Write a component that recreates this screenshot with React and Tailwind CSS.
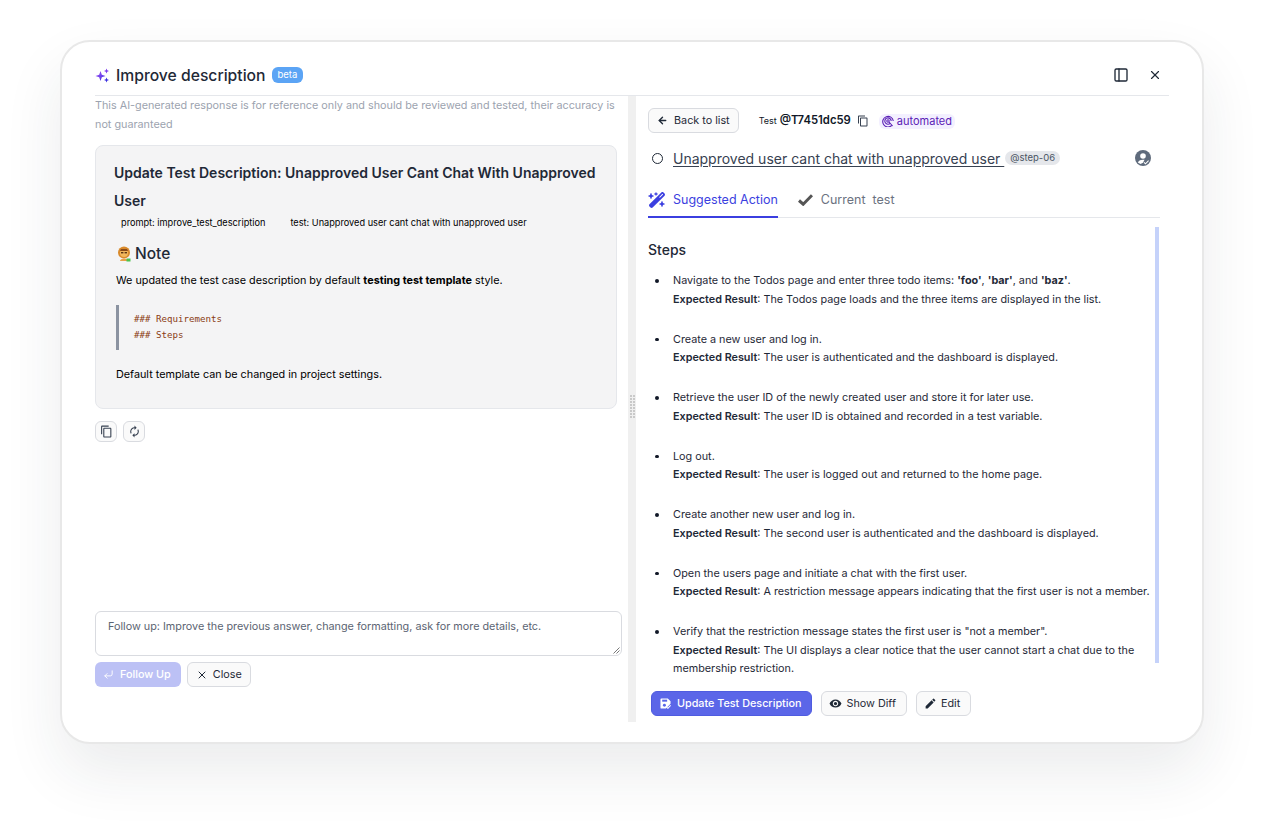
import { ArrowLeft, CornerDownLeft, PanelLeft, X } from "lucide-react";
import { FaWandMagicSparkles } from "react-icons/fa6";
import { MdAutorenew, MdEdit, MdOutlineContentCopy, MdVisibility } from "react-icons/md";

const steps = [
  {
    action: (
      <>
        Navigate to the Todos page and enter three todo items: <b>'foo'</b>, <b>'bar'</b>, and <b>'baz'</b>.
      </>
    ),
    result: "The Todos page loads and the three items are displayed in the list.",
  },
  { action: "Create a new user and log in.", result: "The user is authenticated and the dashboard is displayed." },
  {
    action: "Retrieve the user ID of the newly created user and store it for later use.",
    result: "The user ID is obtained and recorded in a test variable.",
  },
  { action: "Log out.", result: "The user is logged out and returned to the home page." },
  {
    action: "Create another new user and log in.",
    result: "The second user is authenticated and the dashboard is displayed.",
  },
  {
    action: "Open the users page and initiate a chat with the first user.",
    result: "A restriction message appears indicating that the first user is not a member.",
  },
  {
    action: 'Verify that the restriction message states the first user is "not a member".',
    result: "The UI displays a clear notice that the user cannot start a chat due to the membership restriction.",
  },
];

function SparkleIcon() {
  return (
    <svg width="15" height="15" viewBox="0 0 15 15">
      <defs>
        <linearGradient id="spark" x1="0" y1="0" x2="1" y2="1">
          <stop offset="0" stopColor="#a855f7" />
          <stop offset="1" stopColor="#3b2fe0" />
        </linearGradient>
      </defs>
      <path d="M5.5 3 L6.8 6.7 L10.5 8 L6.8 9.3 L5.5 13 L4.2 9.3 L0.5 8 L4.2 6.7 Z" fill="url(#spark)" />
      <path d="M11.5 0.5 L12.2 2.3 L14 3 L12.2 3.7 L11.5 5.5 L10.8 3.7 L9 3 L10.8 2.3 Z" fill="#7c3aed" />
      <path d="M11.5 9.5 L12.2 11.3 L14 12 L12.2 12.7 L11.5 14.5 L10.8 12.7 L9 12 L10.8 11.3 Z" fill="#3b2fe0" />
    </svg>
  );
}

function FarmerEmoji() {
  return (
    <svg width="14" height="16" viewBox="0 0 14 16">
      <ellipse cx="7" cy="6.5" rx="6" ry="6" fill="#d98a2b" />
      <circle cx="7" cy="7" r="4" fill="#f2b75c" />
      <path d="M3 5 L11 5 L10 3 L4 3 Z" fill="#8a4b18" />
      <rect x="4" y="6" width="2.4" height="1.4" fill="#5b3413" />
      <rect x="7.6" y="6" width="2.4" height="1.4" fill="#5b3413" />
      <path d="M3 15 C3 11.5 11 11.5 11 15 Z" fill="#e7a34a" />
      <rect x="9.5" y="12.5" width="4" height="3" fill="#4cc24c" />
    </svg>
  );
}

function AutomatedIcon() {
  return (
    <svg width="12" height="12" viewBox="0 0 12 12" fill="none" stroke="#5b21b6" strokeWidth="1.1">
      <path d="M9.8 10.4 A5.3 5.3 0 1 1 11.3 6" />
      <path d="M8.4 8.2 A3.2 3.2 0 1 1 9.2 6" />
      <circle cx="6" cy="6" r="1.2" />
      <path d="M7 7 L10.6 11" />
    </svg>
  );
}

function UserCheckIcon() {
  return (
    <svg width="16" height="16" viewBox="0 0 16 16">
      <circle cx="8" cy="8" r="8" fill="#5f6b7c" />
      <circle cx="8" cy="6" r="2.8" fill="#fff" />
      <path d="M2.8 12.5 C4 9.8 7 9.4 9.5 9.8 L8 12.8 L5.5 14 Z" fill="#fff" />
      <path d="M9 12.3 L10.5 13.8 L13.6 10.6" fill="none" stroke="#fff" strokeWidth="1.1" />
    </svg>
  );
}

function SaveCheckIcon() {
  return (
    <svg width="11" height="11" viewBox="0 0 12 12">
      <path d="M1.5 0.5 H8.5 L11.5 3.5 V6.2 L6.5 11.5 H1.5 A1 1 0 0 1 0.5 10.5 V1.5 A1 1 0 0 1 1.5 0.5 Z" fill="#fff" />
      <rect x="2.4" y="1.8" width="5.4" height="2.2" fill="#5865e8" />
      <circle cx="4.8" cy="8" r="1.6" fill="#5865e8" />
      <path d="M7.2 10 L8.6 11.3 L11.6 8" fill="none" stroke="#fff" strokeWidth="1.1" />
    </svg>
  );
}

function CheckIcon() {
  return (
    <svg width="15" height="12" viewBox="0 0 15 12" fill="none" stroke="#555" strokeWidth="3">
      <path d="M1 6.5 L5.2 10.2 L14 1.2" />
    </svg>
  );
}

function Button({ children, className = "" }) {
  return (
    <button
      className={`flex h-[25px] items-center rounded-md border border-[#d9dbe0] bg-[#fafafa] text-[10.8px] leading-[16px] text-[#1f2937] ${className}`}
    >
      {children}
    </button>
  );
}

function Splitter() {
  return (
    <div className="flex w-[8px] shrink-0 flex-col items-center justify-center bg-[#f0f0f0]">
      <div className="grid grid-cols-2 gap-x-[1px] gap-y-[1px] pb-[5px]">
        {[...Array(16)].map((_, i) => (
          <span key={i} className="h-[2px] w-[2px] bg-[#c9c9c9]" />
        ))}
      </div>
    </div>
  );
}

function LeftPane() {
  return (
    <div className="flex w-[533px] shrink-0 flex-col pt-[1px]">
      <p className="w-[526px] text-[10.8px] leading-[18.5px] text-[#9ca3af]">
        This AI-generated response is for reference only and should be reviewed and tested, their accuracy is not
        guaranteed
      </p>
      <div className="mt-[11px] h-[264px] w-[522px] rounded-lg border border-[#e5e7eb] bg-[#f4f4f5] px-[18px] pt-[13px]">
        <h2 className="text-[14px] font-semibold leading-[28px] text-[#1f2937]">
          Update Test Description: Unapproved User Cant Chat With Unapproved User
        </h2>
        <div className="mt-[1px] flex gap-[25px] pl-[7px] text-[9.2px] leading-[14px] text-black">
          <span>prompt: improve_test_description</span>
          <span>test: Unapproved user cant chat with unapproved user</span>
        </div>
        <h3 className="mt-[13px] flex items-center gap-[4px] pl-[3px] text-[15.5px] font-medium leading-[22px] text-[#1f2937]">
          <FarmerEmoji />
          Note
        </h3>
        <p className="mt-[7px] pl-[2px] text-[10.8px] leading-[18px] text-black">
          We updated the test case description by default <b>testing test template</b> style.
        </p>
        <div className="ml-[2px] mt-[15px] border-l-[3px] border-[#8b93a1] py-[7px] pl-[15px] font-['DejaVu_Sans_Mono',monospace] text-[9.15px] leading-[15.5px] text-[#8a3b12]">
          <div>### Requirements</div>
          <div>### Steps</div>
        </div>
        <p className="mt-[16px] pl-[2px] text-[10.8px] leading-[18px] text-black">
          Default template can be changed in project settings.
        </p>
      </div>
      <div className="mt-[12px] flex gap-[6px] text-[#374151]">
        <span className="flex h-[21px] w-[22px] items-center justify-center rounded-md border border-[#d9dbe0] bg-[#fafafa]">
          <MdOutlineContentCopy size={13} />
        </span>
        <span className="flex h-[21px] w-[22px] items-center justify-center rounded-md border border-[#d9dbe0] bg-[#fafafa]">
          <MdAutorenew size={13} />
        </span>
      </div>
      <div className="mt-auto pb-[35px]">
        <div className="relative h-[45px] w-[527px] rounded-md border border-[#d9dbe0] px-[12px] pb-[5px] pt-[7px] text-[10.8px] leading-[16px] text-[#5b6472]">
          Follow up: Improve the previous answer, change formatting, ask for more details, etc.
          <svg className="absolute bottom-[1px] right-[1px]" width="7" height="7" viewBox="0 0 7 7" stroke="#777">
            <path d="M0.5 6.5 L6.5 0.5 M3.5 6.5 L6.5 3.5" />
          </svg>
        </div>
        <div className="mt-[6px] flex gap-[6px]">
          <button className="flex h-[25px] items-center gap-[6px] rounded-md bg-[#bcc1f5] pl-[8px] pr-[10px] text-[10.8px] font-medium leading-[16px] text-white">
            <CornerDownLeft size={11} />
            <span className="pt-[1px]">Follow Up</span>
          </button>
          <Button className="gap-[5px] px-[8px]">
            <X size={12} />
            <span className="pt-[1px]">Close</span>
          </Button>
        </div>
      </div>
    </div>
  );
}

function RightPane() {
  return (
    <div className="flex min-w-0 flex-1 flex-col pl-[12px] pr-[9px]">
      <div className="mt-[12px] flex h-[25px] items-center">
        <Button className="gap-[6px] px-[8px]">
          <ArrowLeft size={11} strokeWidth={3} />
          <span className="pt-[1px]">Back to list</span>
        </Button>
        <span className="ml-[20px] pt-[1px] text-[9px] text-[#111827]">Test</span>
        <span className="ml-[3px] text-[11.3px] font-semibold text-[#111827]">@T7451dc59</span>
        <MdOutlineContentCopy size={12} className="ml-[6px] text-[#374151]" />
        <span className="ml-[10px] mt-[1px] flex h-[15px] items-center gap-[3px] rounded-md bg-[#f3f0ff] px-[3px] text-[11px] text-[#5b21b6]">
          <AutomatedIcon />
          automated
        </span>
      </div>
      <div className="mt-[13px] flex h-[24px] items-center pr-[9px]">
        <span className="ml-[4px] h-[11px] w-[11px] rounded-full border-[1.5px] border-[#1f2937]" />
        <span className="ml-[10px] text-[14px] text-[#374151] underline underline-offset-[2px]">
          Unapproved user cant chat with unapproved user&nbsp;
        </span>
        <span className="ml-[1px] rounded-full bg-[#e5e7eb] px-[5px] text-[9.5px] leading-[14px] text-[#4b5563]">
          @step-06
        </span>
        <span className="ml-auto">
          <UserCheckIcon />
        </span>
      </div>
      <div className="mt-[16px] flex h-[32px] border-b border-[#e5e7eb] text-[12.5px]">
        <div className="-mb-px flex h-[32px] items-start gap-[7px] border-b-2 border-[#3b3fe0] pt-[5px] text-[#3b3fe0]">
          <FaWandMagicSparkles size={18} />
          Suggested Action
        </div>
        <div className="ml-[20px] flex items-start gap-[8px] pt-[5px] text-[#6b7280]">
          <span className="mt-[3px]">
            <CheckIcon />
          </span>
          Current&nbsp; test
        </div>
      </div>
      <div className="flex min-h-0 flex-1 pr-[1px]">
        <div className="h-full min-w-0 flex-1 overflow-hidden pt-[23px] text-[10.8px] leading-[18.5px] text-[#1f2937]">
          <h4 className="text-[14px] font-medium leading-[18px] text-[#1f2937]">Steps</h4>
          <ul className="mt-[13px] flex flex-col gap-[21.5px]">
            {steps.map((step, i) => (
              <li key={i} className="relative pl-[25px]">
                <span className="absolute left-[7px] top-[7px] h-[3.5px] w-[3.5px] rounded-full bg-[#111827]" />
                <div>{step.action}</div>
                <div>
                  <b className="font-semibold">Expected Result</b>: {step.result}
                </div>
              </li>
            ))}
          </ul>
        </div>
        <div className="mt-[9px] h-[436px] w-[4px] shrink-0 bg-[#c5d2fa]" />
      </div>
      <div className="mb-[6px] flex gap-[9px] pl-[3px] shadow-[0_24px_24px_-18px_rgba(30,40,60,0.04)]">
        <button className="flex h-[25px] items-center gap-[6px] rounded-md border border-[#4f5ce0] bg-[#5b66e8] pl-[8px] pr-[10px] text-[10.8px] font-medium leading-[16px] text-white">
          <SaveCheckIcon />
          <span className="pt-[1px]">Update Test Description</span>
        </button>
        <Button className="gap-[4px] pl-[7px] pr-[10px]">
          <MdVisibility size={13} />
          <span className="pt-[1px]">Show Diff</span>
        </Button>
        <Button className="gap-[4px] pl-[7px] pr-[10px]">
          <MdEdit size={13} />
          <span className="pt-[1px]">Edit</span>
        </Button>
      </div>
    </div>
  );
}

export default function App() {
  return (
    <div className="h-[824px] w-[1264px] overflow-hidden bg-white pl-[60px] pt-[40px] font-['Inter',sans-serif]">
      <div className="flex h-[704px] w-[1144px] flex-col rounded-[30px] border-2 border-[#e8e8e8] bg-white px-[33px] pb-[20px] shadow-[0_28px_60px_rgba(30,40,60,0.09)]">
        <header className="flex h-[54px] shrink-0 items-center border-b border-[#e5e7eb] pt-[13px]">
          <SparkleIcon />
          <h1 className="ml-[6px] pt-[1px] text-[15.7px] font-medium text-[#1f2937]">Improve description</h1>
          <span className="ml-[6px] rounded-md bg-[#5ba4f5] px-[6px] text-[9.5px] leading-[16px] text-white">beta</span>
          <PanelLeft size={16} className="ml-auto text-[#1f2937]" />
          <X size={14} className="ml-[19px] mr-[7px] text-[#1f2937]" />
        </header>
        <div className="flex min-h-0 flex-1">
          <LeftPane />
          <Splitter />
          <RightPane />
        </div>
      </div>
    </div>
  );
}
